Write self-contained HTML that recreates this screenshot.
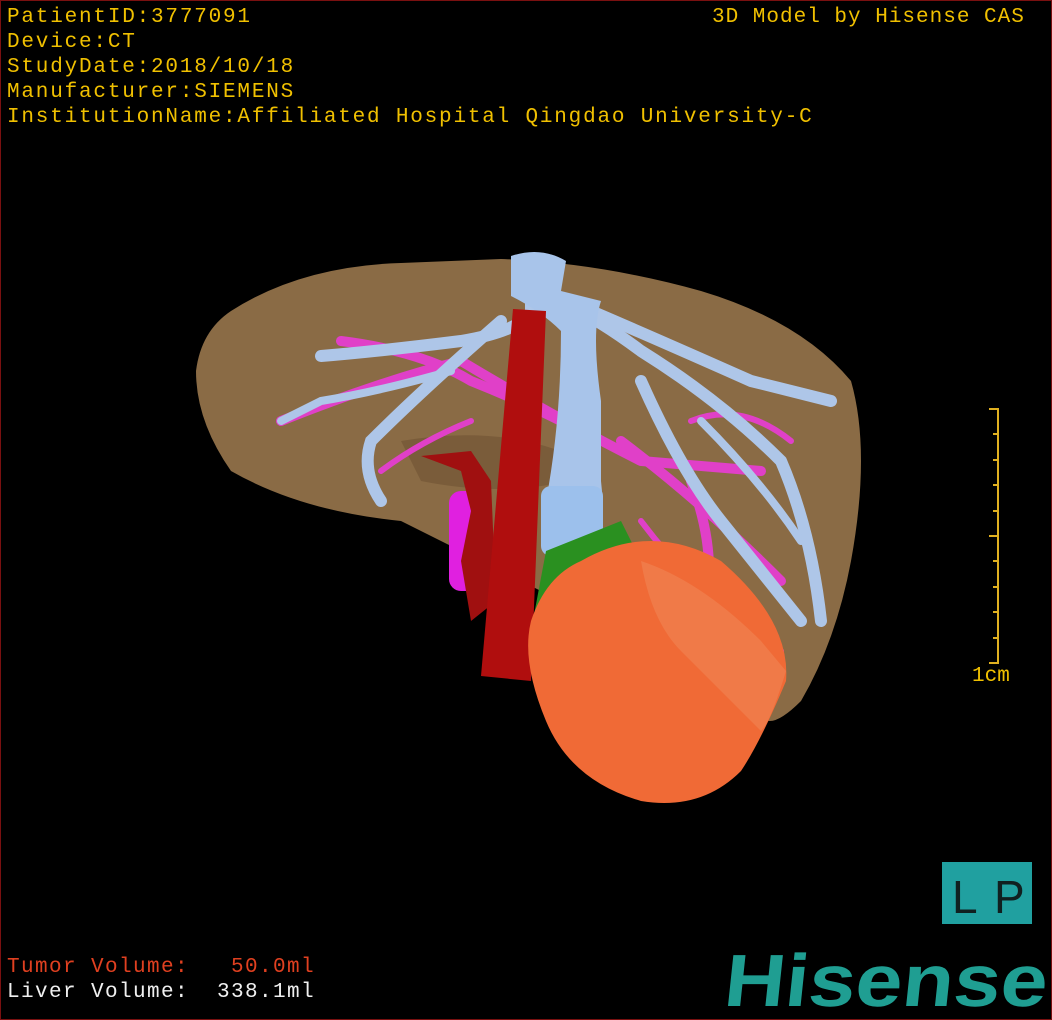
<!DOCTYPE html>
<html><head><style>
html,body{margin:0;padding:0;background:#000}
#c{position:relative;width:1050px;height:1018px;border:1px solid #7a1010;overflow:hidden;background:#000;font-family:"Liberation Mono","DejaVu Sans Mono",monospace}
.t{position:absolute;color:#f0c000;font-size:21px;line-height:25px;letter-spacing:1.8px;white-space:pre}
.r{color:#e04020}
</style></head><body><div id="c">
<svg width="1050" height="1018" style="position:absolute;left:0;top:0">
<path d="M230 310 Q300 265 400 262 L500 258 Q600 262 700 290 Q800 320 850 380 Q870 450 850 560 Q835 640 800 700 Q770 730 760 715 L700 640 L560 600 L480 560 Q420 530 400 520 Q300 510 230 470 Q195 420 195 370 Q200 330 230 310Z" fill="#8a6b45"/>
<path d="M400 440 Q520 420 600 470 Q520 500 420 480Z" fill="#7a5c3a"/>
<g stroke="#e040c8" stroke-width="10" fill="none" stroke-linecap="round">
<path d="M280 420 Q380 380 460 360 Q560 420 640 460 L760 470"/>
<path d="M340 340 Q420 350 470 380 Q520 400 560 420"/>
<path d="M620 440 Q700 500 780 580"/>
<path d="M690 480 Q720 560 700 620"/>
<path d="M640 520 Q700 600 780 650" stroke-width="6"/>
<path d="M380 470 Q420 440 470 420" stroke-width="6"/>
<path d="M690 420 Q740 400 790 440" stroke-width="6"/>
</g>
<rect x="448" y="490" width="36" height="100" rx="12" fill="#e020e0"/>
<g stroke="#aec6e8" stroke-width="12" fill="none" stroke-linecap="round">
<path d="M530 260 L530 310 Q520 330 460 340 Q380 350 320 355"/>
<path d="M560 300 Q600 320 640 350 Q720 400 780 460 Q810 530 820 620"/>
<path d="M590 310 Q660 340 750 380 L830 400"/>
<path d="M500 320 Q420 390 370 440 Q360 470 380 500"/>
<path d="M640 380 Q680 470 720 520 Q760 570 800 620"/>
<path d="M450 370 Q380 390 320 400 L280 420" stroke-width="8"/>
<path d="M700 420 Q760 480 800 540" stroke-width="8"/>
</g>
<path d="M510 255 Q540 245 565 260 L560 290 L600 300 Q590 330 600 400 L600 480 Q605 520 590 550 L560 555 Q540 540 545 500 Q560 420 560 330 Q540 310 510 295Z" fill="#a8c4ea"/>
<rect x="540" y="485" width="62" height="70" rx="10" fill="#9cc0ec"/>
<path d="M420 455 L470 450 L490 480 L495 600 L470 620 L460 560 L470 510 L460 470Z" fill="#a01010"/>
<path d="M545 550 L620 520 L640 560 L560 640 L530 630Z" fill="#2a9020"/>
<path d="M512 308 L545 310 L530 680 L480 675Z" fill="#b00e0e"/>
<path d="M580 560 Q650 520 720 560 Q790 620 785 680 Q760 740 740 770 Q700 810 640 800 Q570 780 545 720 Q520 660 530 620 Q545 575 580 560Z" fill="#f06a36"/>
<path d="M640 560 Q700 580 760 640 L785 670 Q770 720 760 730 Q720 690 680 650 Q650 620 640 560Z" fill="#f07a48"/>
<g stroke="#e0b020" stroke-width="2">
<line x1="997" y1="408" x2="997" y2="662"/>
<line x1="988" y1="408" x2="998" y2="408"/><line x1="988" y1="662" x2="998" y2="662"/>
<line x1="992" y1="433" x2="998" y2="433"/><line x1="992" y1="459" x2="998" y2="459"/><line x1="992" y1="484" x2="998" y2="484"/><line x1="992" y1="510" x2="998" y2="510"/><line x1="988" y1="535" x2="998" y2="535"/><line x1="992" y1="560" x2="998" y2="560"/><line x1="992" y1="586" x2="998" y2="586"/><line x1="992" y1="611" x2="998" y2="611"/><line x1="992" y1="637" x2="998" y2="637"/>
</g>
<rect x="941" y="861" width="90" height="62" fill="#20a0a0"/>
<text x="951" y="912" font-family="Liberation Sans Narrow,Liberation Sans,sans-serif" font-size="46" fill="#102020">L</text>
<text x="993" y="912" font-family="Liberation Sans Narrow,Liberation Sans,sans-serif" font-size="46" fill="#102020">P</text>
<text x="722" y="1005" font-family="Liberation Sans,sans-serif" font-weight="bold" font-size="74" fill="#1f9e92" textLength="323" lengthAdjust="spacingAndGlyphs" transform="skewX(-6) translate(105 0)">Hisense</text>
</svg>
<div class="t" style="left:6px;top:4px">PatientID:3777091
Device:CT
StudyDate:2018/10/18
Manufacturer:SIEMENS
InstitutionName:Affiliated Hospital Qingdao University-C</div>
<div class="t" style="left:711px;top:4px;letter-spacing:1px">3D Model by Hisense CAS</div>
<div class="t" style="left:971px;top:663px;letter-spacing:0">1cm</div>
<div class="t r" style="left:6px;top:954px;letter-spacing:1.4px">Tumor Volume:   50.0ml</div>
<div class="t" style="left:6px;top:979px;color:#f0f0f0;letter-spacing:1.4px">Liver Volume:  338.1ml</div>
</div></body></html>
